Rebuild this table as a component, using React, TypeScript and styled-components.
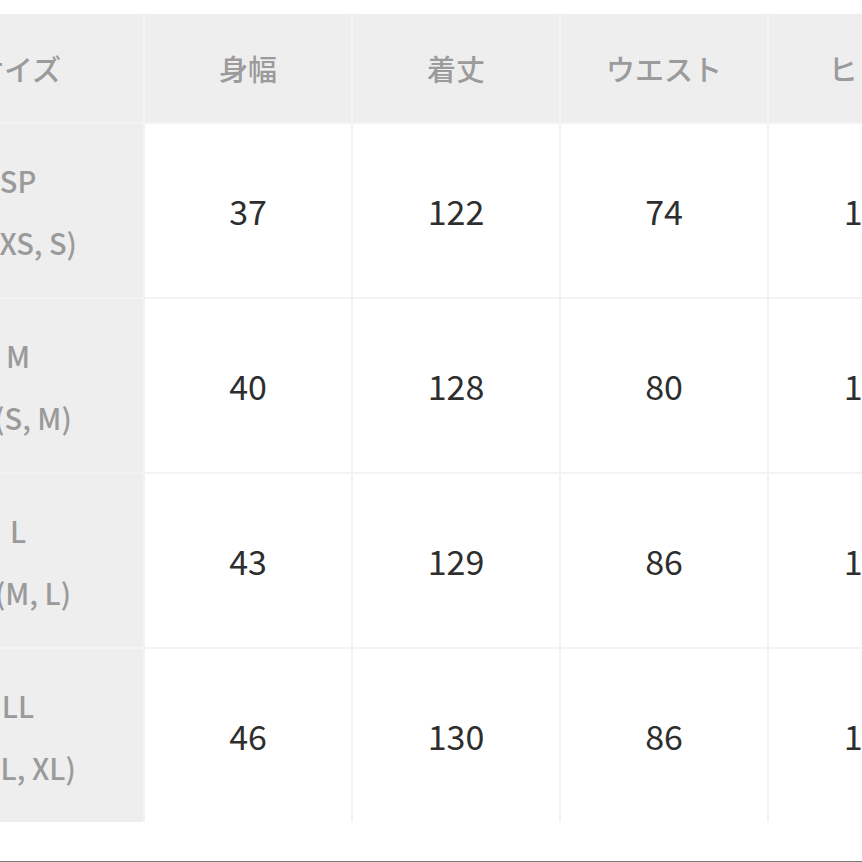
import React from "react"
import styled, { createGlobalStyle } from "styled-components"

const GlobalStyle = createGlobalStyle`
  html, body {
    margin: 0;
    padding: 0;
    background: #ffffff;
  }
  body {
    font-family: "Noto Sans CJK JP", "Noto Sans", sans-serif;
  }
`

type Row = {
  size: string
  note: string
  values: string[]
}

const headers = ["身幅", "着丈", "ウエスト", "ヒップ"]

const rows: Row[] = [
  { size: "SP", note: "(XS, S)", values: ["37", "122", "74", "100"] },
  { size: "M", note: "(S, M)", values: ["40", "128", "80", "106"] },
  { size: "L", note: "(M, L)", values: ["43", "129", "86", "112"] },
  { size: "LL", note: "(L, XL)", values: ["46", "130", "86", "118"] },
]

const Page = styled.div`
  width: 862px;
  height: 862px;
  overflow: hidden;
  padding-top: 14px;
  box-sizing: border-box;
  background: #ffffff;
`

const Table = styled.div`
  display: grid;
  grid-template-columns: 250px repeat(4, 206px);
  grid-template-rows: 108px repeat(4, 173px);
  gap: 2px;
  margin-left: -107px;
  width: max-content;
  background: #f3f3f3;
`

const HeadCell = styled.div`
  display: flex;
  align-items: center;
  justify-content: center;
  background: #eeeeee;
  color: #9b9b9b;
  font-size: 29px;
  font-weight: 500;
`

const SizeCell = styled.div`
  display: flex;
  flex-direction: column;
  align-items: center;
  justify-content: center;
  background: #eeeeee;
  color: #9a9a9a;
  font-size: 29px;
  font-weight: 500;
  line-height: 62px;
`

const SizeNote = styled.span`
  padding-left: 30px;
`

const ValueCell = styled.div`
  display: flex;
  align-items: center;
  justify-content: center;
  background: #ffffff;
  color: #2e2e2e;
  font-size: 34px;
  font-weight: 400;
`

const Divider = styled.div`
  margin-top: 39px;
  height: 4px;
  background: #7c7c7c;
`

const App = () => {
  return (
    <Page>
      <GlobalStyle />
      <Table>
        <HeadCell>サイズ</HeadCell>
        {headers.map((h) => (
          <HeadCell key={h}>{h}</HeadCell>
        ))}
        {rows.map((row) => (
          <React.Fragment key={row.size}>
            <SizeCell>
              <span>{row.size}</span>
              <SizeNote>{row.note}</SizeNote>
            </SizeCell>
            {row.values.map((v, i) => (
              <ValueCell key={i}>{v}</ValueCell>
            ))}
          </React.Fragment>
        ))}
      </Table>
      <Divider />
    </Page>
  )
}

export default App
